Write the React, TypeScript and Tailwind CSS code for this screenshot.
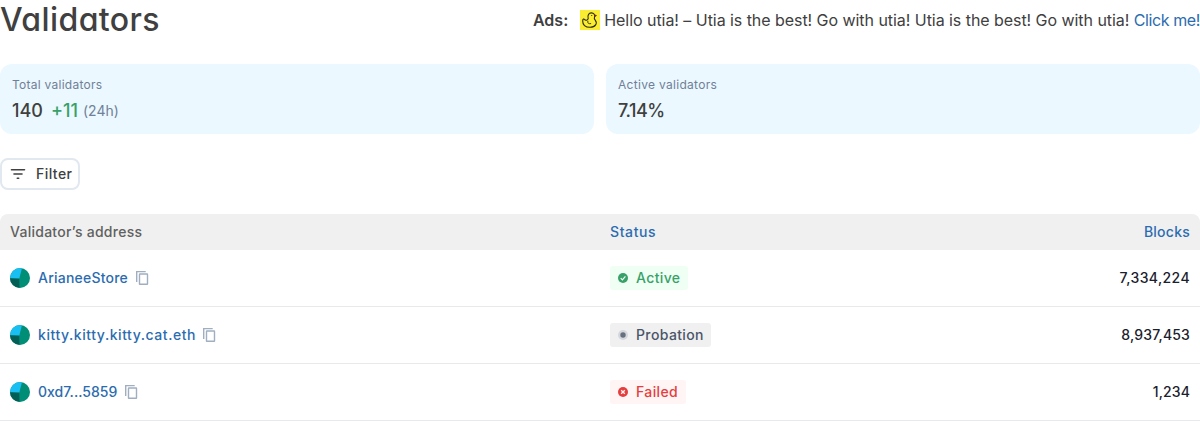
import type { ReactNode } from 'react';

type Status = 'Active' | 'Probation' | 'Failed';

const rows: { name: string; nameClass: string; status: Status; blocks: string; blocksClass: string }[] = [
  {
    name: 'ArianeeStore',
    nameClass: 'w-[90px] tracking-[0.22px]',
    status: 'Active',
    blocks: '7,334,224',
    blocksClass: 'tracking-[0.4px]',
  },
  {
    name: 'kitty.kitty.kitty.cat.eth',
    nameClass: 'w-[157px] tracking-[0.56px]',
    status: 'Probation',
    blocks: '8,937,453',
    blocksClass: 'tracking-[0.15px]',
  },
  { name: '0xd7...5859', nameClass: 'w-[79px] tracking-[0.04px]', status: 'Failed', blocks: '1,234', blocksClass: 'tracking-[0.1px]' },
];

function DuckIcon() {
  return (
    <svg className="mr-1 h-5 w-5 shrink-0" viewBox="0 0 20 20" fill="none">
      <path d="M0 0h20v20H0z" fill="#f9ec31" />
      <path
        d="M8.200 8.600C7.300 5.400 8.800 2.900 11.300 2.900c2.700 0 4 2.200 3.200 4.200-.5 1.300-.6 1.800.7 3 2.600 3.200.2 7.200-5.100 7.200-5 0-7.500-2.600-7.400-6.300.1-2.200 1.200-2.400 2-1.300C5.600 10.800 7.700 10.200 8.200 8.600Z"
        stroke="#29260f"
        strokeWidth="1.100"
      />
      <path d="M7.900 10.800c-.6 2.400.6 3.200 3.200 2.800" stroke="#29260f" strokeWidth=".9" />
      <circle cx="11.700" cy="5.500" r=".6" fill="#29260f" />
      <path d="m14.200 4.300 2.800 1-2.300 2.300z" fill="#7a2d12" />
    </svg>
  );
}

function AddressIcon() {
  return (
    <svg className="h-5 w-5 shrink-0" viewBox="0 0 20 20">
      <clipPath id="disc">
        <circle cx="10" cy="10" r="10" />
      </clipPath>
      <g clipPath="url(#disc)">
        <path d="M0 0h20v20H0z" fill="#018e77" />
        <path d="M0 0h12L9.300 10.500H0z" fill="#19bff2" />
        <path d="M0 10.200 9.200 10.800 9.500 20H0z" fill="#035e56" />
      </g>
    </svg>
  );
}

function CopyIcon() {
  return (
    <svg className="ml-2 h-5 w-5 shrink-0" viewBox="0 0 20 20" fill="none" stroke="#a0aec0" strokeWidth="1.400">
      <path d="M.7 14V3.600h9" />
      <rect x="3.500" y="6" width="8" height="10.300" rx=".4" />
    </svg>
  );
}

const tags: Record<Status, { box: string; icon: ReactNode }> = {
  Active: {
    box: 'bg-[#f0fff4] text-[#38a169] w-[78px]',
    icon: (
      <>
        <circle cx="5" cy="5" r="5" fill="#38a169" />
        <path d="m2.700 5.100 1.700 1.700 3-3.500" stroke="#f0fff4" strokeWidth="1.200" />
      </>
    ),
  },
  Probation: {
    box: 'bg-[#f0f0f0] text-[#4a5568] w-[101px]',
    icon: (
      <>
        <circle cx="5" cy="5" r="5" fill="#d5d7dc" />
        <circle cx="5" cy="5" r="2.700" fill="#667080" />
      </>
    ),
  },
  Failed: {
    box: 'bg-[#fff5f5] text-[#e53e3e] w-[76px]',
    icon: (
      <>
        <circle cx="5" cy="5" r="5" fill="#e53e3e" />
        <path d="m3.200 3.200 3.600 3.600m0-3.600L3.200 6.800" stroke="#fff5f5" strokeWidth="1.300" />
      </>
    ),
  },
};

function StatusTag({ status }: { status: Status }) {
  const tag = tags[status];
  return (
    <span className={`flex h-6 items-center rounded-[3px] pl-2 tracking-[0.38px] ${tag.box}`}>
      <svg className="mr-2 h-2.5 w-2.5 shrink-0" viewBox="0 0 10 10" fill="none">
        {tag.icon}
      </svg>
      {status}
    </span>
  );
}

export default function App() {
  return (
    <main className="h-[421px] w-[1200px] overflow-hidden bg-white font-['Inter',sans-serif] text-[#404040]">
      <header className="flex h-10 items-center justify-between">
        <h1 className="text-[32px] leading-10 font-medium tracking-[0.4px] [font-feature-settings:'cv11']">
          Validators
        </h1>
        <div className="flex items-center whitespace-nowrap text-base leading-6">
          <span className="mr-3 font-semibold">Ads:</span>
          <DuckIcon />
          <span className="tracking-[-0.05px]">
            Hello utia! – Utia is the best! Go with utia! Utia is the best! Go with utia!{' '}
            <a className="tracking-[-0.4px] text-[#2b6cb0]">Click me!</a>
          </span>
        </div>
      </header>

      <section className="mt-6 grid grid-cols-2 gap-3">
        <div className="h-[70px] rounded-xl bg-[#ebf8ff] p-3">
          <p className="text-xs leading-[18px] tracking-[0.26px] text-[#718096]">Total validators</p>
          <p className="flex items-center text-lg leading-[34px] font-medium">
            <span>140</span>
            <span className="ml-2 text-[#38a169]">+11</span>
            <span className="ml-[5px] text-sm leading-[34px] font-normal tracking-[0.05px] text-[#718096]">(24h)</span>
          </p>
        </div>
        <div className="h-[70px] rounded-xl bg-[#ebf8ff] p-3">
          <p className="text-xs leading-[18px] tracking-[0.3px] text-[#718096]">Active validators</p>
          <p className="text-lg leading-[34px] font-medium tracking-[-0.5px]">7.14%</p>
        </div>
      </section>

      <button className="mt-6 flex h-8 w-20 items-center rounded-lg border-2 border-[#e2e8f0] pl-2 text-sm font-medium tracking-[0.45px]">
        <svg className="mr-2.5 h-4 w-4 shrink-0" viewBox="0 0 16 16" fill="none" stroke="#404040" strokeWidth="1.600" strokeLinecap="round">
          <path d="M1.500 3.800h13M4 8h8M7.300 12.200h1.400" />
        </svg>
        Filter
      </button>

      <section className="mt-6 text-sm leading-5 font-medium">
        <div className="grid h-9 grid-cols-[600px_300px_300px] items-center rounded-t-lg bg-[#f0f0f0]">
          <span className="pl-2.5 tracking-[0.26px] text-[#606060]">Validator’s address</span>
          <span className="pl-2.5 tracking-[0.6px] text-[#2b6cb0]">Status</span>
          <span className="pr-2.5 text-right tracking-[0.25px] text-[#2b6cb0]">Blocks</span>
        </div>
        {rows.map((row) => (
          <div
            key={row.name}
            className="grid h-[57px] grid-cols-[600px_300px_300px] items-center border-b border-[#e8e9ea]"
          >
            <div className="flex items-center pl-2.5">
              <AddressIcon />
              <a className={`ml-2 whitespace-nowrap text-[#2b6cb0] ${row.nameClass}`}>{row.name}</a>
              <CopyIcon />
            </div>
            <div className="flex pl-2.5">
              <StatusTag status={row.status} />
            </div>
            <span className={`pr-2.5 text-right text-[#1a202c] ${row.blocksClass}`}>{row.blocks}</span>
          </div>
        ))}
      </section>
    </main>
  );
}
